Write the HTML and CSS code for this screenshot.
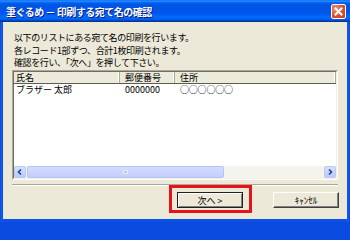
FILE: index.html
```html
<!DOCTYPE html>
<html lang="ja">
<head>
<meta charset="utf-8">
<link rel="stylesheet" href="styles.css">
</head>
<body>
<div class="window">
  <div class="titlebar">
    <span class="title">筆ぐるめ － 印刷する宛て名の確認</span>
    <span class="close">
      <svg width="15" height="15" viewBox="0 0 15 15">
        <path d="M4.5 4.5 L10.5 10.5 M10.5 4.5 L4.5 10.5" stroke="#fff" stroke-width="2" stroke-linecap="square"/>
      </svg>
    </span>
  </div>
  <div class="client">
    <div class="msg">
      <p>以下のリストにある宛て名の印刷を行います。</p>
      <p>各レコード1部ずつ、合計1枚印刷されます。</p>
      <p>確認を行い、「次へ」を押して下さい。</p>
    </div>
    <div class="list">
      <div class="inner">
        <div class="head">
          <div class="col c1">氏名</div>
          <div class="col c2">郵便番号</div>
          <div class="col c3">住所</div>
        </div>
        <div class="rows">
          <div class="row">
            <div class="cell c1">ブラザー 太郎</div>
            <div class="cell c2">0000000</div>
            <div class="cell c3">○○○○○○</div>
          </div>
        </div>
        <div class="hscroll">
          <div class="arrow">
            <svg width="10" height="10" viewBox="0 0 10 10"><path d="M6 2.5 L3.5 5 L6 7.5" stroke="#2a3f8a" stroke-width="1.6" fill="none"/></svg>
          </div>
          <div class="track"><div class="thumb"><span class="grip"></span></div></div>
          <div class="arrow">
            <svg width="10" height="10" viewBox="0 0 10 10"><path d="M4 2.5 L6.5 5 L4 7.5" stroke="#2a3f8a" stroke-width="1.6" fill="none"/></svg>
          </div>
        </div>
      </div>
    </div>
    <div class="sep"></div>
    <div class="buttons">
      <div class="btnwrap">
        <button class="btn default">次へ &gt;</button>
        <span class="highlight"></span>
      </div>
      <button class="btn">ｷｬﾝｾﾙ</button>
    </div>
  </div>
</div>
</body>
</html>
```

FILE: styles.css
```css
* { box-sizing: border-box; margin: 0; padding: 0; }
html, body { width: 350px; height: 222px; overflow: hidden; }
body {
  font-family: "Noto Sans CJK JP", "Noto Sans", sans-serif;
  font-size: 9px;
  color: #000;
  background: #0b4be0;
}
.window {
  width: 350px;
  height: 222px;
  display: flex;
  flex-direction: column;
  background: linear-gradient(to right, #0a3ec8 0, #1663f0 1px, #0c52e8 2px, #0c52e8 347px, #1660ef 348px, #0a3ec8 350px);
}
.titlebar {
  height: 22px;
  flex: none;
  display: flex;
  align-items: center;
  justify-content: space-between;
  padding: 0 4px 0 6px;
  background: linear-gradient(to bottom, #0058ee 0%, #3593ff 4%, #288eff 6%, #127dff 8%, #036ffc 10%, #0262ee 14%, #0057e5 20%, #0054e3 24%, #0055eb 56%, #005bf5 66%, #026afe 76%, #0062ef 86%, #0052d6 92%, #0040ab 94%, #003092 100%);
}
.title {
  color: #fff;
  font-size: 10px;
  font-weight: bold;
  letter-spacing: -0.5px;
  text-shadow: 1px 1px 0 #0a1a80;
  white-space: nowrap;
}
.close {
  width: 15px;
  height: 15px;
  display: flex;
  border: 1px solid #fff;
  border-radius: 2px;
  background: radial-gradient(circle at 30% 30%, #f39a7a 0, #e2552f 45%, #c83a1c 100%);
}
.close svg { margin: -1px; }
.client {
  flex: 1;
  margin: 0 3px 3px;
  background: #ece9d8;
  padding: 10px 8px 0 9px;
  display: flex;
  flex-direction: column;
}
.msg {
  padding-left: 2px;
  line-height: 12.5px;
  height: 37.5px;
  white-space: nowrap;
}
.msg p { letter-spacing: -0.4px; }
.list {
  margin-top: 0.5px;
  height: 110px;
  flex: none;
  margin-right: 1px;
  border: 1px solid;
  border-color: #aca899 #fff #fff #aca899;
}
.inner {
  height: 100%;
  border: 1px solid;
  border-color: #716f64 #f1efe2 #f1efe2 #716f64;
  background: #fff;
  display: flex;
  flex-direction: column;
}
.head {
  height: 12px;
  flex: none;
  display: flex;
  background: #ebeadb;
  border-bottom: 1px solid #5e5c52;
  line-height: 11px;
}
.col {
  border-right: 1px solid #aca899;
  box-shadow: inset -1px 0 0 #fff;
  white-space: nowrap;
}
.c1 { width: 106px; padding-left: 2px; flex: none; }
.c2 { width: 55px; padding-left: 5px; flex: none; }
.c3 { flex: 1; padding-left: 5px; }
.rows { flex: 1; background: #fff; }
.row { display: flex; height: 12px; line-height: 12px; }
.cell { white-space: nowrap; border: none; }
.row .c3 { letter-spacing: -0.2px; }
.hscroll {
  height: 12px;
  flex: none;
  display: flex;
  background: #f4f3ee;
}
.arrow {
  width: 12px;
  height: 12px;
  flex: none;
  display: flex;
  align-items: center;
  justify-content: center;
  border: 1px solid #bccaf4;
  border-radius: 2px;
  background: linear-gradient(to bottom, #d5e0fc, #b8cbf8);
}
.track { flex: 1; padding: 0 1px; display: flex; }
.thumb {
  width: 197px;
  height: 12px;
  border: 1px solid #b5c3f5;
  border-radius: 2px;
  background: linear-gradient(to bottom, #d4dcfd, #c2cefc);
  display: flex;
  align-items: center;
  justify-content: center;
}
.grip {
  width: 5px;
  height: 4px;
  border: 1px solid #e6ebff;
  background: #b8c6f8;
}
.sep {
  margin-top: 4px;
  margin-right: 1px;
  height: 2px;
  flex: none;
  border-top: 1px solid #aca899;
  border-bottom: 1px solid #fff;
}
.buttons {
  margin-top: 6px;
  display: flex;
  justify-content: flex-end;
  gap: 30px;
}
.btnwrap { position: relative; display: flex; }
.btn {
  width: 66px;
  height: 16px;
  font: inherit;
  color: #000;
  background: #ece9d8;
  border: 1px solid;
  border-color: #fff #404040 #404040 #fff;
  box-shadow: inset -1px -1px 0 #808080;
  line-height: 13px;
}
.btn.default {
  border: 1px solid #202020;
  box-shadow: inset 1px 1px 0 #fff, inset -1px -1px 0 #808080;
}
.highlight {
  position: absolute;
  left: -8px;
  top: -7px;
  width: 83px;
  height: 28px;
  border: 3px solid #e8121a;
}
```
